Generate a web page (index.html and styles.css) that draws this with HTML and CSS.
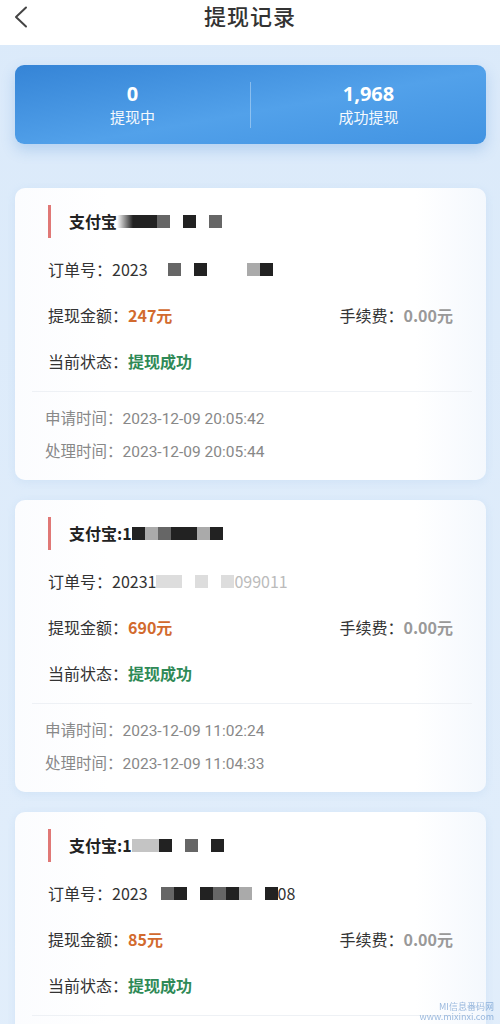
FILE: index.html
```html
<!DOCTYPE html>
<html lang="zh-CN">
<head>
    <meta charset="UTF-8">
    <meta name="viewport" content="width=device-width, initial-scale=1.0">
    <title>提现记录</title>
    <link rel="stylesheet" href="styles.css">
</head>
<body>
    <header class="top-bar">
        <a class="back" href="#">
            <svg width="16" height="22" viewBox="0 0 16 22"><path d="M13 1.5 L3 11 L13 20.5" fill="none" stroke="#444" stroke-width="2" stroke-linecap="round" stroke-linejoin="round"/></svg>
        </a>
        <h1>提现记录</h1>
    </header>

    <main class="page">
        <section class="stats">
            <div class="stat">
                <div class="stat-num">0</div>
                <div class="stat-label">提现中</div>
            </div>
            <div class="stat">
                <div class="stat-num">1,968</div>
                <div class="stat-label">成功提现</div>
            </div>
        </section>

        <!-- record 1 -->
        <div class="record">
            <div class="record-main">
                <div class="account">支付宝<span class="m m-blur"></span><span class="m m-mid"></span><span class="gap"></span><span class="m m-dark"></span><span class="gap"></span><span class="m m-mid"></span></div>
                <div class="row">订单号：2023<span class="gap2"></span><span class="m m-mid"></span><span class="gap"></span><span class="m m-dark"></span><span class="gap3"></span><span class="m m-light"></span><span class="m m-dark"></span></div>
                <div class="row split">
                    <span>提现金额：<b class="amount">247元</b></span>
                    <span>手续费：<b class="fee">0.00元</b></span>
                </div>
                <div class="row">当前状态：<b class="status">提现成功</b></div>
            </div>
            <div class="record-time">
                <div>申请时间：2023-12-09 20:05:42</div>
                <div>处理时间：2023-12-09 20:05:44</div>
            </div>
        </div>

        <!-- record 2 -->
        <div class="record">
            <div class="record-main">
                <div class="account">支付宝:1<span class="m m-dark"></span><span class="m m-light"></span><span class="m m-mid"></span><span class="m m-dark"></span><span class="m m-dark"></span><span class="m m-light"></span><span class="m m-dark"></span></div>
                <div class="row">订单号：20231<span class="m m-faint"></span><span class="m m-faint"></span><span class="gap"></span><span class="m m-faint"></span><span class="gap"></span><span class="m m-faint"></span><span class="faint-text">099011</span></div>
                <div class="row split">
                    <span>提现金额：<b class="amount">690元</b></span>
                    <span>手续费：<b class="fee">0.00元</b></span>
                </div>
                <div class="row">当前状态：<b class="status">提现成功</b></div>
            </div>
            <div class="record-time">
                <div>申请时间：2023-12-09 11:02:24</div>
                <div>处理时间：2023-12-09 11:04:33</div>
            </div>
        </div>

        <!-- record 3 -->
        <div class="record">
            <div class="record-main">
                <div class="account">支付宝:1<span class="m m-light wide"></span><span class="m m-dark"></span><span class="gap"></span><span class="m m-mid"></span><span class="gap"></span><span class="m m-dark"></span></div>
                <div class="row">订单号：2023<span class="gap"></span><span class="m m-mid"></span><span class="m m-dark"></span><span class="gap"></span><span class="m m-dark"></span><span class="m m-mid"></span><span class="m m-dark"></span><span class="m m-light"></span><span class="gap"></span><span class="m m-dark"></span>08</div>
                <div class="row split">
                    <span>提现金额：<b class="amount">85元</b></span>
                    <span>手续费：<b class="fee">0.00元</b></span>
                </div>
                <div class="row">当前状态：<b class="status">提现成功</b></div>
            </div>
            <div class="record-time">
                <div>申请时间：2023-12-09 10:12:05</div>
                <div>处理时间：2023-12-09 10:13:40</div>
            </div>
        </div>
    </main>

    <div class="watermark">MI信息番码网<br>www.mixinxi.com</div>
</body>
</html>
```

FILE: styles.css
```css
body {
    margin: 0;
    font-family: "Noto Sans CJK SC", "Noto Sans", sans-serif;
    background: linear-gradient(to bottom, #dbeafa, #e2eefb);
    color: #333;
    min-height: 100vh;
}

.top-bar {
    background: #fff;
    height: 45px;
    position: relative;
    text-align: center;
}

.top-bar h1 {
    margin: 0;
    font-size: 22px;
    font-weight: 500;
    line-height: 30px;
    color: #333;
    letter-spacing: 1px;
}

.back {
    position: absolute;
    left: 13px;
    top: 6px;
    line-height: 0;
}

.page {
    padding: 20px 14px 20px 15px;
}

.stats {
    display: flex;
    height: 79px;
    border-radius: 9px;
    background: linear-gradient(170deg, #3584d6 0%, #52a1ea 55%, #4193e2 100%);
    box-shadow: 0 6px 14px rgba(60, 130, 210, 0.25);
    margin-bottom: 44px;
    align-items: center;
}

.stat {
    flex: 1;
    text-align: center;
    color: #fff;
}

.stat + .stat {
    border-left: 1px solid rgba(255, 255, 255, 0.35);
}

.stat-num {
    font-size: 20px;
    font-weight: 700;
    line-height: 24px;
    font-family: "Open Sans", "Noto Sans", sans-serif;
}

.stat-label {
    font-size: 15px;
    line-height: 22px;
    opacity: 0.95;
}

.record {
    background: linear-gradient(to right, #fbfcfe, #ffffff 20%, #ffffff 85%, #f4f8fd);
    border-radius: 10px;
    padding: 17px 14px 0 17px;
    margin-bottom: 20px;
    height: 292px;
    box-sizing: border-box;
    box-shadow: 0 2px 8px rgba(150, 190, 230, 0.2);
}

.record-main {
    padding: 0 19px 7px 16px;
}

.account {
    height: 33px;
    line-height: 33px;
    border-left: 3px solid #e07876;
    padding-left: 18px;
    font-size: 16px;
    font-weight: 700;
    color: #222;
    margin-bottom: 8px;
    display: flex;
    align-items: center;
}

.row {
    height: 46px;
    line-height: 46px;
    font-size: 16px;
    color: #333;
    display: flex;
    align-items: center;
}

.split {
    justify-content: space-between;
}

.amount {
    color: #d26a2e;
    font-weight: 700;
}

.fee {
    color: #999;
    font-weight: 700;
}

.status {
    color: #2f8a57;
    font-weight: 700;
}

.record-time {
    border-top: 1px solid #eef1f5;
    padding: 11px 13px 11px 13px;
    font-family: "Roboto", "Noto Sans CJK SC", sans-serif;
    font-size: 15.5px;
    line-height: 33px;
    color: #888;
}

.m {
    display: inline-block;
    width: 13px;
    height: 13px;
}

.m-dark { background: #222; }
.m-mid { background: #666; }
.m-light { background: #aaa; }
.m-faint { background: #ddd; }
.m-blur {
    width: 40px;
    background: linear-gradient(to right, rgba(30, 30, 30, 0) 0%, #222 40%, #222 100%);
}
.wide { width: 27px; background: #c4c4c4; }

.gap { display: inline-block; width: 13px; }
.gap2 { display: inline-block; width: 20px; }
.gap3 { display: inline-block; width: 40px; }

.faint-text {
    color: #bbb;
}

.watermark {
    position: fixed;
    right: 6px;
    bottom: 2px;
    font-size: 9px;
    line-height: 10px;
    color: rgba(90, 140, 200, 0.6);
    text-align: right;
}
```
